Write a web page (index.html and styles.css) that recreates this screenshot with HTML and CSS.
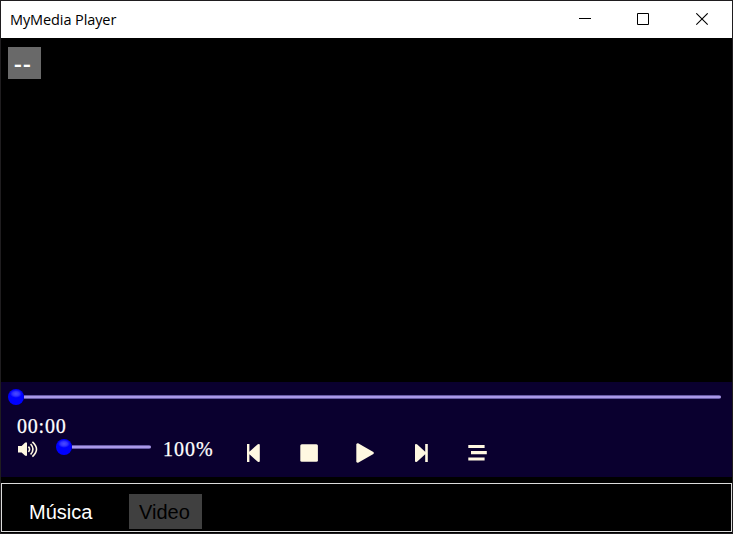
FILE: index.html
```html
<!DOCTYPE html>
<html lang="es">
<head>
<meta charset="utf-8">
<title>MyMedia Player</title>
<link rel="stylesheet" href="styles.css">
</head>
<body>
<div class="window">
  <header class="titlebar">
    <span class="title">MyMedia Player</span>
    <div class="window-buttons">
      <svg width="13" height="13" viewBox="0 0 13 13"><path d="M0 5.5H12" stroke="#000"/></svg>
      <svg width="13" height="13" viewBox="0 0 13 13"><path d="M.5 .5H11.5V11.5H.5Z" fill="none" stroke="#000"/></svg>
      <svg width="13" height="13" viewBox="0 0 13 13"><path d="M.3 .3L11.7 11.7M11.7 .3L.3 11.7" stroke="#000" stroke-width="1.1"/></svg>
    </div>
  </header>
  <main class="screen"><span class="badge">--</span></main>
  <section class="controls">
    <div class="slider seek"><i class="knob"></i><i class="track"></i></div>
    <div class="time">00:00</div>
    <div class="row">
      <svg class="speaker" width="20" height="17" viewBox="0 0 20 17">
        <path d="M0 5H3.6L7.2 1.6H9V14.8H7.2L3.6 11.4H0Z" fill="#fff8e1"/>
        <path d="M10.4 5.6Q12.8 8.2 10.4 10.9M12.6 3Q17.4 8.2 12.6 13.5M14.4 .9Q22.6 8.2 14.4 15.6" fill="none" stroke="#fff8e1" stroke-width="1.6"/>
      </svg>
      <div class="slider volume"><i class="knob"></i><i class="track"></i></div>
      <span class="percent">100%</span>
      <div class="buttons">
        <svg width="20" height="20" viewBox="0 0 20 20"><path d="M4 1H6.4V8.7L14.8 1.2Q16.8 .4 16.8 2V18Q16.8 19.6 14.8 18.8L6.4 11.3V19H4Z" fill="#fff8e1"/></svg>
        <svg width="20" height="20" viewBox="0 0 20 20"><rect x="1.3" y="1.2" width="17.6" height="17.6" rx="1.5" fill="#fff8e1"/></svg>
        <svg width="20" height="20" viewBox="0 0 20 20"><path d="M1.3 1.5Q1.6 .1 3.1 .3L18.4 9Q19.5 10 18.4 11L3.1 19.7Q1.6 19.9 1.3 18.5Z" fill="#fff8e1"/></svg>
        <svg width="20" height="20" viewBox="0 0 20 20"><path d="M4 2Q4 .4 6 1.2L14.2 8.7V1H16.8V19H14.2V11.3L6 18.8Q4 19.6 4 18Z" fill="#fff8e1"/></svg>
        <svg width="20" height="20" viewBox="0 0 20 20"><path d="M1.3 3.5H17.6M4 9.7H19.8M1.3 16H17.6" stroke="#fff8e1" stroke-width="3.2"/></svg>
      </div>
    </div>
  </section>
  <nav class="tabs">
    <span class="tab active">Música</span>
    <span class="tab">Video</span>
  </nav>
</div>
</body>
</html>
```
FILE: styles.css
```css
* { box-sizing: border-box; }
body { margin: 0; background: #000; }
.window {
  width: 733px;
  height: 534px;
  border: 1px solid #1f1d1f;
  background: #000;
  display: flex;
  flex-direction: column;
}
svg { display: block; flex: none; }
.titlebar {
  height: 37px;
  flex: none;
  background: #fff;
  display: flex;
  justify-content: space-between;
  padding: 12px 23px 0 9px;
}
.title {
  font: 14.5px/14px "Open Sans", sans-serif;
  letter-spacing: -0.1px;
  color: #000;
  white-space: nowrap;
}
.window-buttons { display: flex; gap: 46px; }
.window-buttons svg:first-child { margin-right: -1px; }
.screen { height: 344px; flex: none; padding: 9px 7px; }
.badge {
  display: block;
  width: 33px;
  height: 32px;
  padding-left: 6px;
  background: #696969;
  color: #fff;
  font: 600 24px/32px "Open Sans", sans-serif;
  letter-spacing: 1.2px;
}
.controls { height: 95px; flex: none; background: #0a002f; padding: 6px 11px 0 7px; }
.slider { display: flex; align-items: center; flex: none; }
.knob {
  width: 16px;
  height: 16px;
  flex: none;
  border-radius: 50%;
  background:
    radial-gradient(ellipse 6px 4px at 50% 30%, #4c4cff 0%, #3333ff 55%, transparent 100%),
    #0000ff;
}
.track {
  flex: 1;
  height: 4px;
  border-radius: 0 2px 2px 0;
  background: linear-gradient(#665aa4 0 25%, #aa98e8 25% 75%, #665aa4 75%);
}
.seek { width: 713px; height: 17px; }
.time {
  height: 29px;
  padding: 10px 0 0 9px;
  font: 20px/22px "Liberation Serif", serif;
  letter-spacing: 0.8px;
  color: #fff;
  -webkit-text-stroke: 0.25px #fff;
}
.row { display: flex; align-items: flex-start; padding-left: 10px; }
.speaker { margin-top: 7px; }
.volume { width: 95px; height: 18px; margin: 4px 0 0 18px; }
.percent {
  width: 52px;
  margin: 4px 0 0 12px;
  font: 20px/22px "Liberation Serif", serif;
  letter-spacing: 1px;
  color: #fff;
  -webkit-text-stroke: 0.25px #fff;
}
.buttons { display: flex; gap: 36px; margin: 9px 0 0 28px; }
.tabs {
  height: 49px;
  flex: none;
  margin-top: 6px;
  border: 1px solid #dcdcdc;
  display: flex;
  padding: 10px 0 0 17px;
}
.tab {
  height: 35px;
  padding: 0 10px;
  background: #404040;
  color: #000;
  font: 20px/36px "Liberation Sans", sans-serif;
  width: 73px;
}
.tab.active { background: transparent; color: #fff; width: 110px; }
```
